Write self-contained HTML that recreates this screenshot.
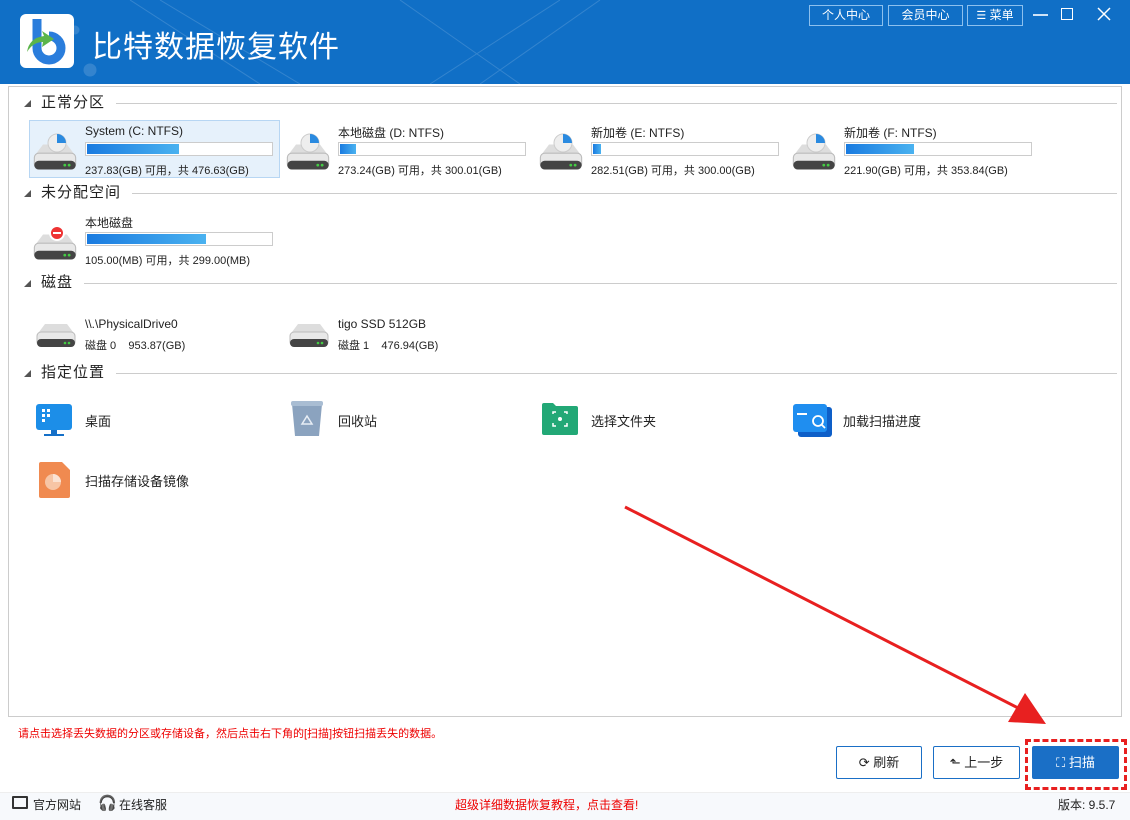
<!DOCTYPE html>
<html><head><meta charset="utf-8"><style>
*{margin:0;padding:0;box-sizing:border-box}
body{width:1130px;height:820px;position:relative;overflow:hidden;background:#fff;font-family:"Liberation Sans","Noto Sans CJK SC",sans-serif;color:#222}
.a{position:absolute}
.title{left:0;top:0;width:1130px;height:84px;background:#106fc6}
.tb{position:absolute;top:5px;height:21px;border:1px solid #8cc0ee;color:#fff;font-size:12px;line-height:19px;text-align:center}
.panel{left:8px;top:86px;width:1114px;height:631px;border:1px solid #ccc}
.sec{position:absolute;left:27px;font-size:15px;color:#222;height:20px;line-height:20px}
.sec i{position:absolute;left:-3px;top:7px;width:0;height:0;border-left:7px solid transparent;border-bottom:7px solid #555}
.sec span{position:absolute;left:14px;white-space:nowrap;letter-spacing:1px}
.line{position:absolute;height:1px;background:#ccc;right:5px}
.item{position:absolute;width:250px;height:57px}
.item .n{position:absolute;left:55px;top:3px;font-size:12px;white-space:nowrap}
.item .bar{position:absolute;left:55px;top:21px;width:188px;height:14px;border:1px solid #ccc;background:#fff}
.item .bar b{display:block;height:10px;margin:1px;background:linear-gradient(90deg,#1a7be0,#4ab2f0)}
.item .info{position:absolute;left:55px;top:41px;font-size:11px;white-space:nowrap}
.btn{position:absolute;top:746px;height:33px;border:1px solid #1a6fc6;border-radius:2px;font-size:13px;line-height:31px;text-align:center;color:#222;background:#fff}
.lbl{position:absolute;font-size:12px;white-space:nowrap}
</style></head><body>
<div class="a title">
 <svg class="a" style="left:0;top:0" width="700" height="84" opacity="0.15"><g stroke="#fff" fill="none" stroke-width="1"><path d="M130 0 L260 84 M160 0 L300 84 M400 0 L520 84 M430 84 L560 0 M600 0 L480 84"/><circle cx="75" cy="30" r="4" fill="#fff"/><circle cx="90" cy="70" r="6" fill="#fff"/></g></svg>
 <div class="a" style="left:20px;top:14px;width:54px;height:54px;background:#fff;border-radius:6px"></div>
 <svg class="a" style="left:20px;top:14px" width="54" height="54"><path d="M17 5 V34 A12 12 0 1 0 29 22" stroke="#2a7ddc" stroke-width="9" fill="none"/><path d="M7 38 Q9 24 24 22 L22 17 L34 25 L22 33 L23 28 Q13 28 7 38Z" fill="#5bb54a"/></svg>
 <div class="a" style="left:92px;top:22px;font-size:30px;color:#fff;letter-spacing:1px;font-family:'Noto Sans CJK SC',sans-serif">比特数据恢复软件</div>
 <div class="tb" style="left:809px;width:74px">个人中心</div>
 <div class="tb" style="left:888px;width:75px">会员中心</div>
 <div class="tb" style="left:967px;width:56px"><span style="font-size:11px">☰</span> 菜单</div>
 <div class="a" style="left:1033px;top:14px;width:15px;height:2px;background:#cfe3f7"></div>
 <div class="a" style="left:1061px;top:8px;width:12px;height:12px;border:1.5px solid #fff"></div>
 <svg class="a" style="left:1097px;top:7px" width="14" height="14"><path d="M1 1L13 13M13 1L1 13" stroke="#fff" stroke-width="1.5"/></svg>
</div>

<div class="a panel"></div>

<div class="sec" style="top:93px"><i></i><span>正常分区</span></div><div class="line" style="left:116px;right:13px;top:103px"></div>
<div class="sec" style="top:183px"><i></i><span>未分配空间</span></div><div class="line" style="left:132px;right:13px;top:193px"></div>
<div class="sec" style="top:273px"><i></i><span>磁盘</span></div><div class="line" style="left:84px;right:13px;top:283px"></div>
<div class="sec" style="top:363px"><i></i><span>指定位置</span></div><div class="line" style="left:116px;right:13px;top:373px"></div>

<svg width="0" height="0" style="position:absolute"><defs>
<symbol id="hd" viewBox="0 0 46 40"><path d="M6 22 L12 14 H34 L40 22Z" fill="#ddd"/><rect x="4" y="22" width="38" height="14" rx="4" fill="#e8e8e8" stroke="#bbb"/><rect x="4" y="29" width="38" height="8" rx="4" fill="#444"/><circle cx="32" cy="33" r="1.3" fill="#4c4"/><circle cx="36" cy="33" r="1.3" fill="#4c4"/></symbol>
</defs></svg>

<div class="item" style="left:29px;top:120px;width:251px;height:58px;background:#e6f1fb;border:1px solid #b7d6f3"></div>
<div class="item" style="left:30px;top:121px"><svg class="a" style="left:0;top:8px" width="50" height="44"><use href="#hd"/><circle cx="27" cy="14" r="9" fill="#eee" stroke="#ccc"/><path d="M27 14V5A9 9 0 0 1 36 14Z" fill="#2a8ae0"/></svg><div class="n">System (C: NTFS)</div><div class="bar"><b style="width:92px"></b></div><div class="info">237.83(GB) 可用，共 476.63(GB)</div></div>
<div class="item" style="left:283px;top:121px"><svg class="a" style="left:0;top:8px" width="50" height="44"><use href="#hd"/><circle cx="27" cy="14" r="9" fill="#eee" stroke="#ccc"/><path d="M27 14V5A9 9 0 0 1 36 14Z" fill="#2a8ae0"/></svg><div class="n">本地磁盘 (D: NTFS)</div><div class="bar"><b style="width:16px"></b></div><div class="info">273.24(GB) 可用，共 300.01(GB)</div></div>
<div class="item" style="left:536px;top:121px"><svg class="a" style="left:0;top:8px" width="50" height="44"><use href="#hd"/><circle cx="27" cy="14" r="9" fill="#eee" stroke="#ccc"/><path d="M27 14V5A9 9 0 0 1 36 14Z" fill="#2a8ae0"/></svg><div class="n">新加卷 (E: NTFS)</div><div class="bar"><b style="width:8px"></b></div><div class="info">282.51(GB) 可用，共 300.00(GB)</div></div>
<div class="item" style="left:789px;top:121px"><svg class="a" style="left:0;top:8px" width="50" height="44"><use href="#hd"/><circle cx="27" cy="14" r="9" fill="#eee" stroke="#ccc"/><path d="M27 14V5A9 9 0 0 1 36 14Z" fill="#2a8ae0"/></svg><div class="n">新加卷 (F: NTFS)</div><div class="bar"><b style="width:68px"></b></div><div class="info">221.90(GB) 可用，共 353.84(GB)</div></div>
<div class="item" style="left:30px;top:211px"><svg class="a" style="left:0;top:8px" width="50" height="44"><use href="#hd"/><circle cx="27" cy="14" r="7" fill="#e33" stroke="#fff" stroke-width="2"/><rect x="23" y="13" width="8" height="2" fill="#fff"/></svg><div class="n">本地磁盘</div><div class="bar"><b style="width:119px"></b></div><div class="info">105.00(MB) 可用，共 299.00(MB)</div></div>

<svg class="a" style="left:33px;top:310px" width="46" height="40"><use href="#hd"/></svg>
<div class="lbl" style="left:85px;top:317px">\\.\PhysicalDrive0</div>
<div class="lbl" style="left:85px;top:337px;font-size:11px">磁盘 0 &nbsp;&nbsp;&nbsp;953.87(GB)</div>
<svg class="a" style="left:286px;top:310px" width="46" height="40"><use href="#hd"/></svg>
<div class="lbl" style="left:338px;top:317px">tigo SSD 512GB</div>
<div class="lbl" style="left:338px;top:337px;font-size:11px">磁盘 1 &nbsp;&nbsp;&nbsp;476.94(GB)</div>

<svg class="a" style="left:35px;top:403px" width="38" height="34"><rect x="1" y="1" width="36" height="26" rx="3" fill="#1c8ee8"/><rect x="7" y="6" width="3" height="3" fill="#fff"/><rect x="12" y="6" width="3" height="3" fill="#fff"/><rect x="7" y="11" width="3" height="3" fill="#fff"/><rect x="12" y="11" width="3" height="3" fill="#fff"/><rect x="7" y="16" width="3" height="3" fill="#fff"/><rect x="16" y="27" width="6" height="4" fill="#1570c8"/><rect x="9" y="31" width="20" height="2" fill="#1570c8"/></svg>
<div class="lbl" style="left:85px;top:411px;font-size:13px">桌面</div>
<svg class="a" style="left:290px;top:400px" width="34" height="38"><path d="M2 4 H32 L29 36 H5Z" fill="#8ba3bf"/><rect x="1" y="1" width="32" height="5" rx="2" fill="#a9bdd3"/><path d="M12 24 L17 16 L22 24Z" fill="none" stroke="#e8eef5" stroke-width="1.5"/></svg>
<div class="lbl" style="left:338px;top:411px;font-size:13px">回收站</div>
<svg class="a" style="left:541px;top:402px" width="38" height="34"><path d="M1 3 Q1 1 3 1 H12 L15 4 H35 Q37 4 37 6 V31 Q37 33 35 33 H3 Q1 33 1 31Z" fill="#22a876"/><path d="M12 12 V10 H15 M23 10 H26 V12 M26 21 V24 H23 M15 24 H12 V21" stroke="#fff" fill="none" stroke-width="1.5"/><circle cx="19" cy="17" r="2" fill="#fff"/></svg>
<div class="lbl" style="left:591px;top:411px;font-size:13px">选择文件夹</div>
<svg class="a" style="left:792px;top:403px" width="42" height="36"><rect x="6" y="4" width="34" height="30" rx="3" fill="#0e5fc8"/><rect x="1" y="1" width="34" height="28" rx="3" fill="#1f8ef0"/><rect x="5" y="10" width="10" height="2" fill="#fff"/><circle cx="26" cy="18" r="5" fill="none" stroke="#fff" stroke-width="1.8"/><path d="M30 22 L33 25" stroke="#fff" stroke-width="1.8"/></svg>
<div class="lbl" style="left:843px;top:411px;font-size:13px">加载扫描进度</div>
<svg class="a" style="left:38px;top:461px" width="34" height="38"><path d="M3 1 H24 L32 9 V35 Q32 37 30 37 H3 Q1 37 1 35 V3 Q1 1 3 1Z" fill="#f08a50"/><circle cx="15" cy="21" r="8" fill="#f7c5a5"/><path d="M15 21 V13 A8 8 0 0 1 23 21Z" fill="#fbe2d2"/></svg>
<div class="lbl" style="left:85px;top:471px;font-size:13px">扫描存储设备镜像</div>

<div class="lbl" style="left:18px;top:725px;color:#e00;font-size:11px">请点击选择丢失数据的分区或存储设备，然后点击右下角的[扫描]按钮扫描丢失的数据。</div>
<div class="btn" style="left:836px;width:86px">⟳ 刷新</div>
<div class="btn" style="left:933px;width:87px">⬑ 上一步</div>
<div class="btn" style="left:1032px;width:87px;background:#1a6fc6;color:#fff">⛶ 扫描</div>
<div class="a" style="left:1025px;top:739px;width:102px;height:51px;border:3px dashed #e82020"></div>

<svg class="a" style="left:0;top:0" width="1130" height="820"><path d="M625 507 L1018 708" stroke="#e82020" stroke-width="3"/><path d="M1046 724 L1008 722 L1025 693Z" fill="#e82020"/></svg>

<div class="a" style="left:0;top:792px;width:1130px;height:28px;background:#f7f9fc;border-top:1px solid #eee"></div>
<div class="a" style="left:12px;top:796px;width:16px;height:13px;border:2px solid #333;border-radius:1px"></div>
<div class="lbl" style="left:33px;top:796px">官方网站</div>
<div class="lbl" style="left:98px;top:794px;font-size:15px">🎧</div>
<div class="lbl" style="left:119px;top:796px">在线客服</div>
<div class="lbl" style="left:455px;top:796px;color:#e00">超级详细数据恢复教程，点击查看!</div>
<div class="lbl" style="left:1058px;top:796px">版本: 9.5.7</div>
</body></html>
